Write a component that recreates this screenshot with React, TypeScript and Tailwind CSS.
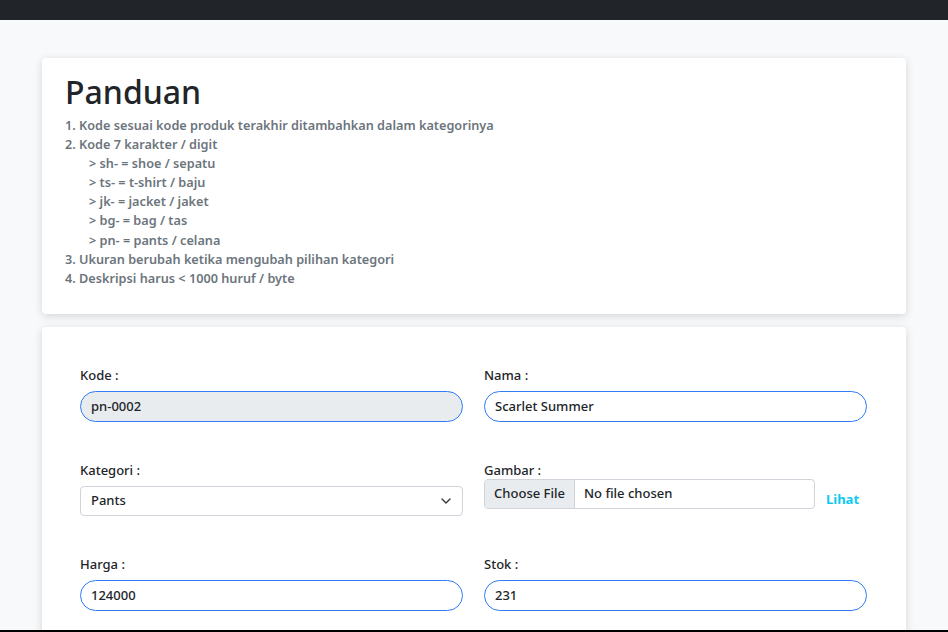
import React from 'react';

const guide = [
    { text: '1. Kode sesuai kode produk terakhir ditambahkan dalam kategorinya' },
    { text: '2. Kode 7 karakter / digit' },
    { text: '> sh- = shoe / sepatu', indent: true },
    { text: '> ts- = t-shirt / baju', indent: true },
    { text: '> jk- = jacket / jaket', indent: true },
    { text: '> bg- = bag / tas', indent: true },
    { text: '> pn- = pants / celana', indent: true },
    { text: '3. Ukuran berubah ketika mengubah pilihan kategori' },
    { text: '4. Deskripsi harus < 1000 huruf / byte' },
];

function Label({ children, h = 'h-[20px]' }: { children: React.ReactNode; h?: string }) {
    return <div className={`${h} leading-[20px] text-[13px] font-medium text-[#212529]`}>{children}</div>;
}

function PillInput({ value, disabled }: { value: string; disabled?: boolean }) {
    return (
        <div
            className={`h-[31px] rounded-full border border-[#2f7cf6] flex items-center px-[10px] text-[13px] font-medium text-[#212529] ${
                disabled ? 'bg-[#e9ecef]' : 'bg-white'
            }`}
        >
            {value}
        </div>
    );
}

export default function App() {
    return (
        <div className="min-h-screen bg-[#f8f9fa] text-[#212529]" style={{ fontFamily: '"Noto Sans", sans-serif' }}>
            {/* Navbar */}
            <div className="h-[20px] bg-[#212529]" />

            <div className="w-[864px] ml-[42px] pt-[38px]">
                {/* Panduan card */}
                <div className="bg-white rounded-[4px] shadow-[0_2px_8px_rgba(0,0,0,0.15)] px-[23px] pt-[15px] pb-[26px]">
                    <h1 className="text-[32px] leading-[38px] font-medium text-[#212529] mb-[5px]">Panduan</h1>
                    <div className="text-[12.7px] leading-[19.1px] font-semibold text-[#6c757d]">
                        {guide.map((g, i) => (
                            <div key={i} className={g.indent ? 'pl-[24px]' : ''}>
                                {g.text}
                            </div>
                        ))}
                    </div>
                </div>

                {/* Form card */}
                <div className="mt-[13px] bg-white rounded-[4px] shadow-[0_2px_8px_rgba(0,0,0,0.15)] pl-[38px] pr-[39px] pt-[38px] pb-[40px]">
                    <div className="grid grid-cols-2 gap-x-[21px] gap-y-[38px]">
                        <div>
                            <Label>Kode :</Label>
                            <div className="mt-[6px]">
                                <PillInput value="pn-0002" disabled />
                            </div>
                        </div>
                        <div>
                            <Label>Nama :</Label>
                            <div className="mt-[6px]">
                                <PillInput value="Scarlet Summer" />
                            </div>
                        </div>

                        <div>
                            <Label>Kategori :</Label>
                            <div className="mt-[6px] h-[30px] rounded-[4px] border border-[#ced4da] flex items-center justify-between pl-[10px] pr-[11px] text-[13px] font-medium">
                                <span>Pants</span>
                                <svg width="10" height="6" viewBox="0 0 10 6" fill="none">
                                    <path d="M1 1l4 4 4-4" stroke="#343a40" strokeWidth="1.4" strokeLinecap="round" strokeLinejoin="round" />
                                </svg>
                            </div>
                        </div>
                        <div>
                            <Label h="h-[19px]">Gambar :</Label>
                            <div className="flex items-end">
                                <div className="w-[331px] h-[30px] rounded-[4px] border border-[#ced4da] flex items-stretch overflow-hidden text-[13px] font-medium">
                                    <div className="w-[90px] bg-[#e9ecef] border-r border-[#ced4da] flex items-center justify-center">
                                        Choose File
                                    </div>
                                    <div className="flex items-center pl-[9px]">No file chosen</div>
                                </div>
                                <a className="ml-[11px] text-[13px] font-bold text-[#0dcaf0] leading-[20px]">Lihat</a>
                            </div>
                        </div>

                        <div>
                            <Label>Harga :</Label>
                            <div className="mt-[6px]">
                                <PillInput value="124000" />
                            </div>
                        </div>
                        <div>
                            <Label>Stok :</Label>
                            <div className="mt-[6px]">
                                <PillInput value="231" />
                            </div>
                        </div>
                    </div>
                </div>
            </div>

            <div className="fixed left-0 right-0 bottom-0 h-[2px] bg-black" />
        </div>
    );
}
